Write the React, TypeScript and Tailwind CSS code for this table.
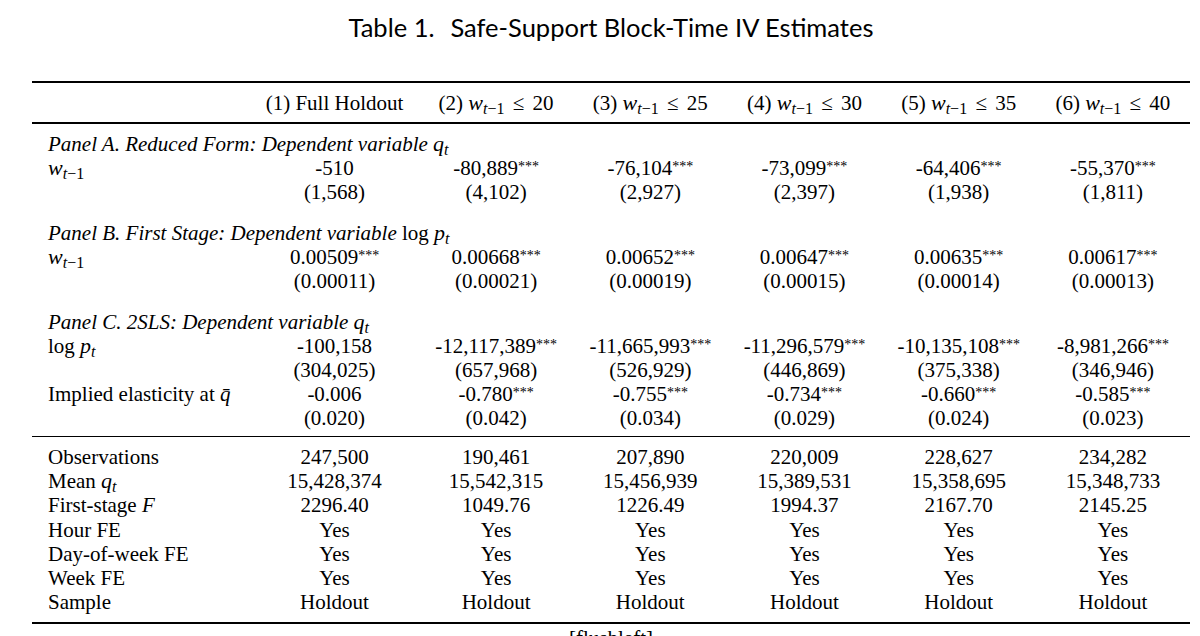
import React from "react";

const GRID = "grid grid-cols-[218px_169px_repeat(5,minmax(0,1fr))] items-center";

function Val({ v }: { v: string }) {
  if (v.endsWith("***")) {
    return (
      <span>
        {v.slice(0, -3)}
        <sup className="text-[14px] top-[-4px]">***</sup>
      </span>
    );
  }
  return <span>{v}</span>;
}

function Wt() {
  return (
    <span className="whitespace-nowrap">
      <i className="text-[22px]">w</i>
      <sub className="text-[16px]">
        <i>t</i>−1
      </sub>
    </span>
  );
}

function Row({
  label,
  vals,
  h = "h-[24px]",
}: {
  label?: React.ReactNode;
  vals: string[];
  h?: string;
}) {
  return (
    <div className={`${GRID} ${h}`}>
      <div className="pl-[16px] whitespace-nowrap">{label}</div>
      {vals.map((v, i) => (
        <div key={i} className="text-center whitespace-nowrap">
          <Val v={v} />
        </div>
      ))}
    </div>
  );
}

function PanelTitle({ children }: { children: React.ReactNode }) {
  return <div className="h-[24px] pl-[16px] italic whitespace-nowrap leading-[24px]">{children}</div>;
}

const yes = ["Yes", "Yes", "Yes", "Yes", "Yes", "Yes"];

export default function App() {
  return (
    <div className="w-[1200px] h-[636px] overflow-hidden bg-white text-black font-['Liberation_Serif',serif] text-[21px] leading-[24px]">
      <div className="ml-[32px] w-[1158px] pt-[12px]">
        <h1 className="h-[69px] text-center font-['Lato',sans-serif] text-[25.5px] leading-[30px]">
          Table 1.<span className="ml-[16px]">Safe-Support Block-Time IV Estimates</span>
        </h1>
        <div className="h-[2px] bg-black" />
        <div className="pt-[8px] pb-[7px]">
          <div className={`${GRID} h-[24px]`}>
            <div />
            <div className="text-center whitespace-nowrap">(1) Full Holdout</div>
            {["20", "25", "30", "35", "40"].map((n, i) => (
              <div key={n} className="text-center whitespace-nowrap">
                ({i + 2}) <Wt /> <span className="mx-[3px]">≤</span> {n}
              </div>
            ))}
          </div>
        </div>
        <div className="h-[1.5px] bg-black" />
        <div className="pt-[8px] pb-[6px]">
          <PanelTitle>
            Panel A. Reduced Form: Dependent variable <span className="text-[22px]">q</span>
            <sub className="text-[16px]">t</sub>
          </PanelTitle>
          <Row label={<Wt />} vals={["-510", "-80,889***", "-76,104***", "-73,099***", "-64,406***", "-55,370***"]} />
          <Row vals={["(1,568)", "(4,102)", "(2,927)", "(2,397)", "(1,938)", "(1,811)"]} />
          <div className="h-[17px]" />
          <PanelTitle>
            Panel B. First Stage: Dependent variable <span className="not-italic">log</span>{" "}
            <span className="text-[22px]">p</span>
            <sub className="text-[16px]">t</sub>
          </PanelTitle>
          <Row
            label={<Wt />}
            vals={["0.00509***", "0.00668***", "0.00652***", "0.00647***", "0.00635***", "0.00617***"]}
          />
          <Row vals={["(0.00011)", "(0.00021)", "(0.00019)", "(0.00015)", "(0.00014)", "(0.00013)"]} />
          <div className="h-[17px]" />
          <PanelTitle>
            Panel C. 2SLS: Dependent variable <span className="text-[22px]">q</span>
            <sub className="text-[16px]">t</sub>
          </PanelTitle>
          <Row
            label={
              <span>
                log <i className="text-[22px]">p</i>
                <sub className="text-[16px]">
                  <i>t</i>
                </sub>
              </span>
            }
            vals={["-100,158", "-12,117,389***", "-11,665,993***", "-11,296,579***", "-10,135,108***", "-8,981,266***"]}
          />
          <Row vals={["(304,025)", "(657,968)", "(526,929)", "(446,869)", "(375,338)", "(346,946)"]} />
          <Row
            label={
              <span>
                Implied elasticity at <i>q̄</i>
              </span>
            }
            vals={["-0.006", "-0.780***", "-0.755***", "-0.734***", "-0.660***", "-0.585***"]}
          />
          <Row vals={["(0.020)", "(0.042)", "(0.034)", "(0.029)", "(0.024)", "(0.023)"]} />
        </div>
        <div className="h-[1px] bg-black" />
        <div className="pt-[8px] pb-[7px]">
          <Row h="h-[24.3px]" label="Observations" vals={["247,500", "190,461", "207,890", "220,009", "228,627", "234,282"]} />
          <Row
            h="h-[24.3px]"
            label={
              <span>
                Mean <i className="text-[22px]">q</i>
                <sub className="text-[16px]">
                  <i>t</i>
                </sub>
              </span>
            }
            vals={["15,428,374", "15,542,315", "15,456,939", "15,389,531", "15,358,695", "15,348,733"]}
          />
          <Row
            h="h-[24.3px]"
            label={
              <span>
                First-stage <i>F</i>
              </span>
            }
            vals={["2296.40", "1049.76", "1226.49", "1994.37", "2167.70", "2145.25"]}
          />
          <Row h="h-[24.3px]" label="Hour FE" vals={yes} />
          <Row h="h-[24.3px]" label="Day-of-week FE" vals={yes} />
          <Row h="h-[24.3px]" label="Week FE" vals={yes} />
          <Row h="h-[24.3px]" label="Sample" vals={["Holdout", "Holdout", "Holdout", "Holdout", "Holdout", "Holdout"]} />
        </div>
        <div className="h-[2px] bg-black" />
        <div className="pt-[2px] text-center leading-[24px]">[flushleft]</div>
      </div>
    </div>
  );
}
